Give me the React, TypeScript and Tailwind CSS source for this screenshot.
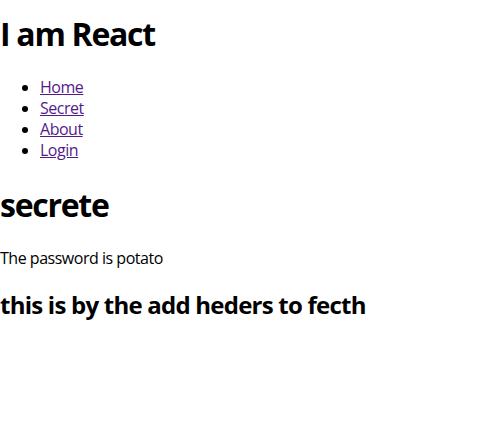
export default function App() {
  const links = ["Home", "Secret", "About", "Login"];
  return (
    <div className="bg-white text-black min-h-screen tracking-[-0.03em]" style={{ fontFamily: '"Open Sans", sans-serif' }}>
      <h1 className="text-[32px] font-bold leading-[43px] pt-[12px] tracking-[-0.04em]">I am React</h1>
      <ul className="list-disc pl-10 mt-[22px] text-[16px] leading-[21px]">
        {links.map((l) => (
          <li key={l}>
            <a href="#" className="text-[#551a8b] underline">{l}</a>
          </li>
        ))}
      </ul>
      <h1 className="text-[32px] font-bold leading-[43px] mt-[22px] tracking-[-0.04em]">secrete</h1>
      <p className="text-[16px] leading-[21px] mt-[22px]">The password is potato</p>
      <h2 className="text-[24px] font-bold leading-[32px] mt-[20px] tracking-[-0.032em]">this is by the add heders to fecth</h2>
    </div>
  );
}
